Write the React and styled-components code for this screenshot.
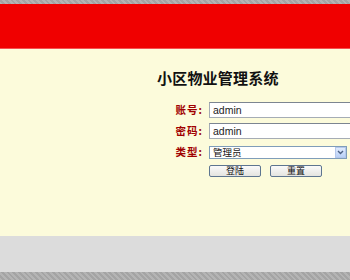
import styled, { createGlobalStyle } from "styled-components";

const GlobalStyle = createGlobalStyle`
  html, body {
    margin: 0;
    padding: 0;
    background: #ababab;
  }
  body {
    font-family: "Liberation Sans", "Noto Sans CJK SC", sans-serif;
  }
`
const Page = styled.div`
  width: 350px;
  height: 280px;
  display: flex;
  flex-direction: column;
  overflow: hidden;
`
const Strip = styled.div`
  height: ${props => props.h}px;
  flex-shrink: 0;
  background-color: #aaaaaa;
  background-image: repeating-linear-gradient(45deg, #b4b4b4 0 2px, #a4a4a4 2px 4px);
`
const Header = styled.div`
  height: 44px;
  flex-shrink: 0;
  background: #f00000;
  border-bottom: 1px solid #f65050;
`
const Main = styled.div`
  height: 187px;
  flex-shrink: 0;
  background: #fcfbdb;
  padding-left: 157px;
  box-sizing: border-box;
`
const Title = styled.h1`
  margin: 19px 0 0;
  font-family: "Noto Sans CJK SC", sans-serif;
  font-size: 15px;
  line-height: 20px;
  font-weight: 700;
  color: #111;
  letter-spacing: 0.2px;
`
const Form = styled.div`
  margin-top: 14px;
  display: grid;
  grid-template-columns: 46px auto;
  column-gap: 6px;
  row-gap: 5px;
  align-items: center;
`
const Label = styled.span`
  font-family: "Noto Sans CJK SC", sans-serif;
  font-size: 10.5px;
  font-weight: 700;
  color: #a00000;
  text-align: right;
  line-height: 16px;
  letter-spacing: 1px;
`
const Input = styled.div`
  width: 150px;
  height: 16px;
  box-sizing: border-box;
  background: #fff;
  border: 1px solid #a5acb5;
  border-top-color: #7c8591;
  padding-left: 3px;
  font-size: 10.5px;
  line-height: 14px;
  color: #222;
`
const Select = styled.div`
  width: 138px;
  height: 13px;
  box-sizing: border-box;
  background: #fff;
  border: 1px solid #7f9db9;
  display: flex;
  align-items: center;
  justify-content: space-between;
  font-family: "Noto Sans CJK SC", sans-serif;
  font-size: 9.5px;
  color: #111;
  padding-left: 3px;
`
const Arrow = styled.span`
  width: 11px;
  height: 11px;
  box-sizing: border-box;
  background: linear-gradient(#e0ebfd, #b9d0f7);
  border: 1px solid #b5c8ec;
  display: flex;
  align-items: center;
  justify-content: center;
`
const Buttons = styled.div`
  grid-column: 2;
  display: flex;
  gap: 9px;
`
const Button = styled.button`
  width: 52px;
  height: 12px;
  padding: 0;
  border: 1px solid #5d7590;
  border-radius: 2px;
  background: linear-gradient(#fafafa, #e4e4e0);
  font-family: "Noto Sans CJK SC", sans-serif;
  font-size: 9px;
  line-height: 10px;
  color: #111;
`
const Footer = styled.div`
  height: 36px;
  flex-shrink: 0;
  background: #dcdcdc;
`

const App = () => {
  return (
    <>
      <GlobalStyle />
      <Page>
        <Strip h={4} />
        <Header />
        <Main>
          <Title>小区物业管理系统</Title>
          <Form>
            <Label>账号:</Label>
            <Input>admin</Input>
            <Label>密码:</Label>
            <Input>admin</Input>
            <Label>类型:</Label>
            <Select>
              管理员
              <Arrow>
                <svg width="7" height="5" viewBox="0 0 7 5">
                  <path d="M1 1 L3.5 3.5 L6 1" fill="none" stroke="#4d6185" strokeWidth="1.4" />
                </svg>
              </Arrow>
            </Select>
            <Buttons>
              <Button>登陆</Button>
              <Button>重置</Button>
            </Buttons>
          </Form>
        </Main>
        <Footer />
        <Strip h={8} />
      </Page>
    </>
  )
}

export default App;
